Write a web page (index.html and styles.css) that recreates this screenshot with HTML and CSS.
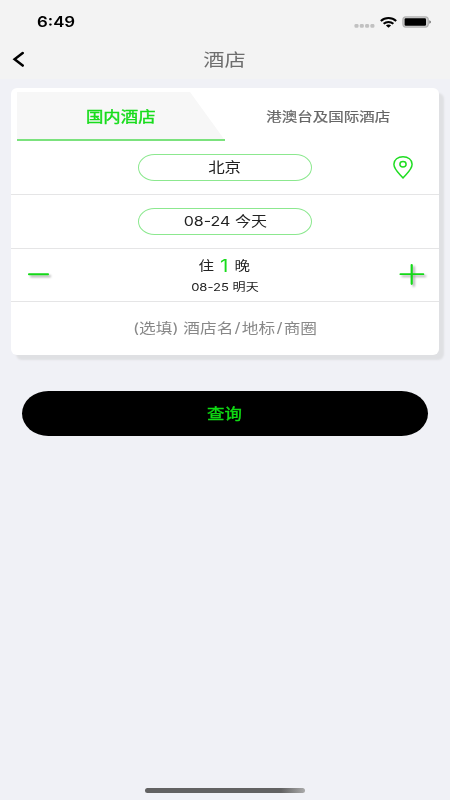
FILE: index.html
```html
<!DOCTYPE html>
<html lang="zh-CN">
<head>
<meta charset="utf-8">
<title>酒店</title>
<link rel="stylesheet" href="styles.css">
</head>
<body>
<header class="header">
  <div class="status">
    <span class="text time">6:49</span>
    <div class="indicators">
      <svg class="signal" width="21" height="4" viewBox="0 0 21 4"><g fill="#c1c1c1"><rect x=".5" width="4" height="3.8" rx="1.3"/><rect x="5.8" width="4" height="3.8" rx="1.3"/><rect x="11.1" width="4" height="3.8" rx="1.3"/><rect x="16.4" width="4" height="3.8" rx="1.3"/></g></svg>
      <svg class="wifi" width="17" height="11" viewBox="0 0 17 11"><g fill="none" stroke="#000" stroke-width="2"><path d="M.8 4.1C5.2.1 11.8.1 16.2 4.1"/><path d="M3.6 6.8C6.4 4.3 10.6 4.3 13.4 6.8"/></g><path d="M5.9 8.5Q8.5 6.5 11.1 8.5L8.5 10.8Z"/></svg>
      <svg class="battery" width="29" height="12" viewBox="0 0 29 12"><rect x=".9" y=".9" width="25.4" height="10.2" rx="3" fill="#d0d0d0" stroke="#b2b2b2" stroke-width="1.2"/><rect x="2.6" y="2.2" width="21.4" height="7.6" rx="1.2"/><path d="M27.3 4.2Q29 5 29 6T27.3 7.8Z" fill="#777"/></svg>
    </div>
  </div>
  <nav class="navbar">
    <svg class="back" width="12" height="17" viewBox="0 0 12 17"><path d="M10.7 2L2.6 8.2L10.7 14.6" fill="none" stroke="#000" stroke-width="2.5" stroke-linecap="round"/></svg>
    <h1 class="text title">酒店</h1>
  </nav>
</header>
<main>
  <section class="card">
    <div class="tabs">
      <div class="tab active"><span class="text">国内酒店</span></div>
      <div class="tab other"><span class="text">港澳台及国际酒店</span></div>
    </div>
    <div class="row city">
      <span></span>
      <div class="pill"><span class="text">北京</span></div>
      <svg class="pin" width="22" height="24" viewBox="0 0 22 24"><g fill="none" stroke="#1fdd22" stroke-width="1.5"><path d="M11 22C8 18.2 1.9 13.6 1.9 8.2C1.9 3.5 6 .8 11 .8S20.1 3.5 20.1 8.2C20.1 13.6 14 18.2 11 22Z" stroke-linejoin="round"/><ellipse cx="11" cy="8.2" rx="3.1" ry="2.7"/></g></svg>
    </div>
    <div class="row date">
      <span></span>
      <div class="pill"><span class="text">08-24 今天</span></div>
      <span></span>
    </div>
    <div class="row nights">
      <svg class="minus" width="26" height="28" viewBox="0 0 26 28"><path d="M4 13.2H23" fill="none" stroke="#14d918" stroke-width="2.1" stroke-linecap="round"/></svg>
      <div class="stay">
        <div class="text count"><span>住</span><b>1</b><span>晚</span></div>
        <span class="text checkout">08-25 明天</span>
      </div>
      <svg class="plus" width="28" height="28" viewBox="0 0 28 28"><path d="M3.4 13.2H26.4" stroke="#14d918" stroke-width="1.8" stroke-linecap="round"/><path d="M14.7 4V22.8" stroke="#14d918" stroke-width="2.2" stroke-linecap="round"/></svg>
    </div>
    <div class="row keyword"><span class="text">(选填) 酒店名<i>/</i>地标<i>/</i>商圈</span></div>
  </section>
  <button class="search"><span class="text">查询</span></button>
</main>
<div class="home-bar"></div>
</body>
</html>
```
FILE: styles.css
```css
* { box-sizing: border-box; }
body {
  margin: 0;
  height: 800px;
  display: flex;
  flex-direction: column;
  overflow: hidden;
  background: #f0f1f6;
  color: #222;
  font-family: Inter, "Noto Sans CJK SC", sans-serif;
}
svg { display: block; }
.text {
  display: inline-block;
  white-space: nowrap;
  line-height: 1;
  transform: scaleX(1.21);
}
.header { height: 79px; background: #f3f3f3; }
.status {
  height: 44px;
  padding: 1px 19px 0 37px;
  display: flex;
  justify-content: space-between;
  align-items: center;
}
.time {
  font: 600 14.4px/1 Inter, sans-serif;
  transform: scaleX(1.17);
  transform-origin: left;
  color: #000;
}
.indicators { display: flex; align-items: center; margin-top: -1px; }
.signal { margin: 8px 5px 0 0; }
.wifi { margin-right: 5px; }
.navbar {
  height: 30px;
  padding: 0 12px;
  display: grid;
  grid-template-columns: 12px 1fr 14px;
  align-items: center;
  justify-items: center;
}
.title { margin: 2px 0 0; font-size: 17.5px; font-weight: 400; color: #6d6d6d; }
.card {
  height: 267px;
  margin: 9px 11px 0;
  padding-top: 4px;
  background: #fff;
  border-radius: 6px;
  box-shadow: 5px 5px 2px #dfe0e3;
}
.tabs { height: 49px; padding: 0 6px; display: flex; }
.tab { display: flex; align-items: center; justify-content: center; padding-top: 2px; }
.active {
  width: 208px;
  padding-right: 1px;
  border-bottom: 1.5px solid #7be27d;
  background: linear-gradient(#7be27d, #7be27d) bottom / 100% 1px no-repeat, #f7f7f7;
  clip-path: polygon(0 0, 173px 0, 207px 47px, 208px 47px, 208px 49px, 0 49px);
  color: #18dc1c;
  font-size: 14.4px;
  -webkit-text-stroke: .4px;
}
.other {
  flex: 1;
  padding-right: 1px;
  color: #666;
  font-size: 12.8px;
  -webkit-text-stroke: .2px;
}
.row {
  height: 54px;
  display: grid;
  grid-template-columns: 127px 174px 1fr;
  align-items: center;
  border-bottom: 1px solid #e5e5e6;
}
.pill {
  height: 27px;
  display: flex;
  align-items: center;
  justify-content: center;
  border: 1px solid #8ce88f;
  border-radius: 17px / 14px;
  font-size: 13.6px;
}
.date .text { transform: scaleX(1.18); }
.pin { margin-left: 80px; }
.nights { height: 53px; }
.minus { margin-left: 14px; filter: drop-shadow(2px 2px 1px #0005); }
.plus { margin-left: 85px; filter: drop-shadow(2px 2px 1px #0005); }
.stay { display: flex; flex-direction: column; align-items: center; }
.count {
  display: flex;
  align-items: center;
  gap: 5px;
  height: 20px;
  margin-right: 2px;
  font-size: 12.8px;
}
.count b { font-size: 17px; font-weight: 400; color: #18dc1c; }
.checkout { margin: 6px 1px 0 0; font-size: 10.8px; }
.keyword {
  display: flex;
  justify-content: center;
  border: 0;
  color: #888;
  font-size: 13.8px;
}
.keyword i { margin: 0 1px; font-style: normal; }
.search {
  width: 406px;
  height: 45px;
  margin: 36px 22px 0;
  padding: 2px 2px 0 0;
  display: flex;
  align-items: center;
  justify-content: center;
  border: 0;
  border-radius: 27px / 23px;
  background: #000;
  color: #10dc14;
  font: 400 14.4px Inter, "Noto Sans CJK SC", sans-serif;
  -webkit-text-stroke: .4px;
}
.home-bar {
  width: 160px;
  height: 5px;
  margin: auto auto 7px 145px;
  border-radius: 3px;
  background: linear-gradient(90deg, #626262 85%, #aaa);
}
```
